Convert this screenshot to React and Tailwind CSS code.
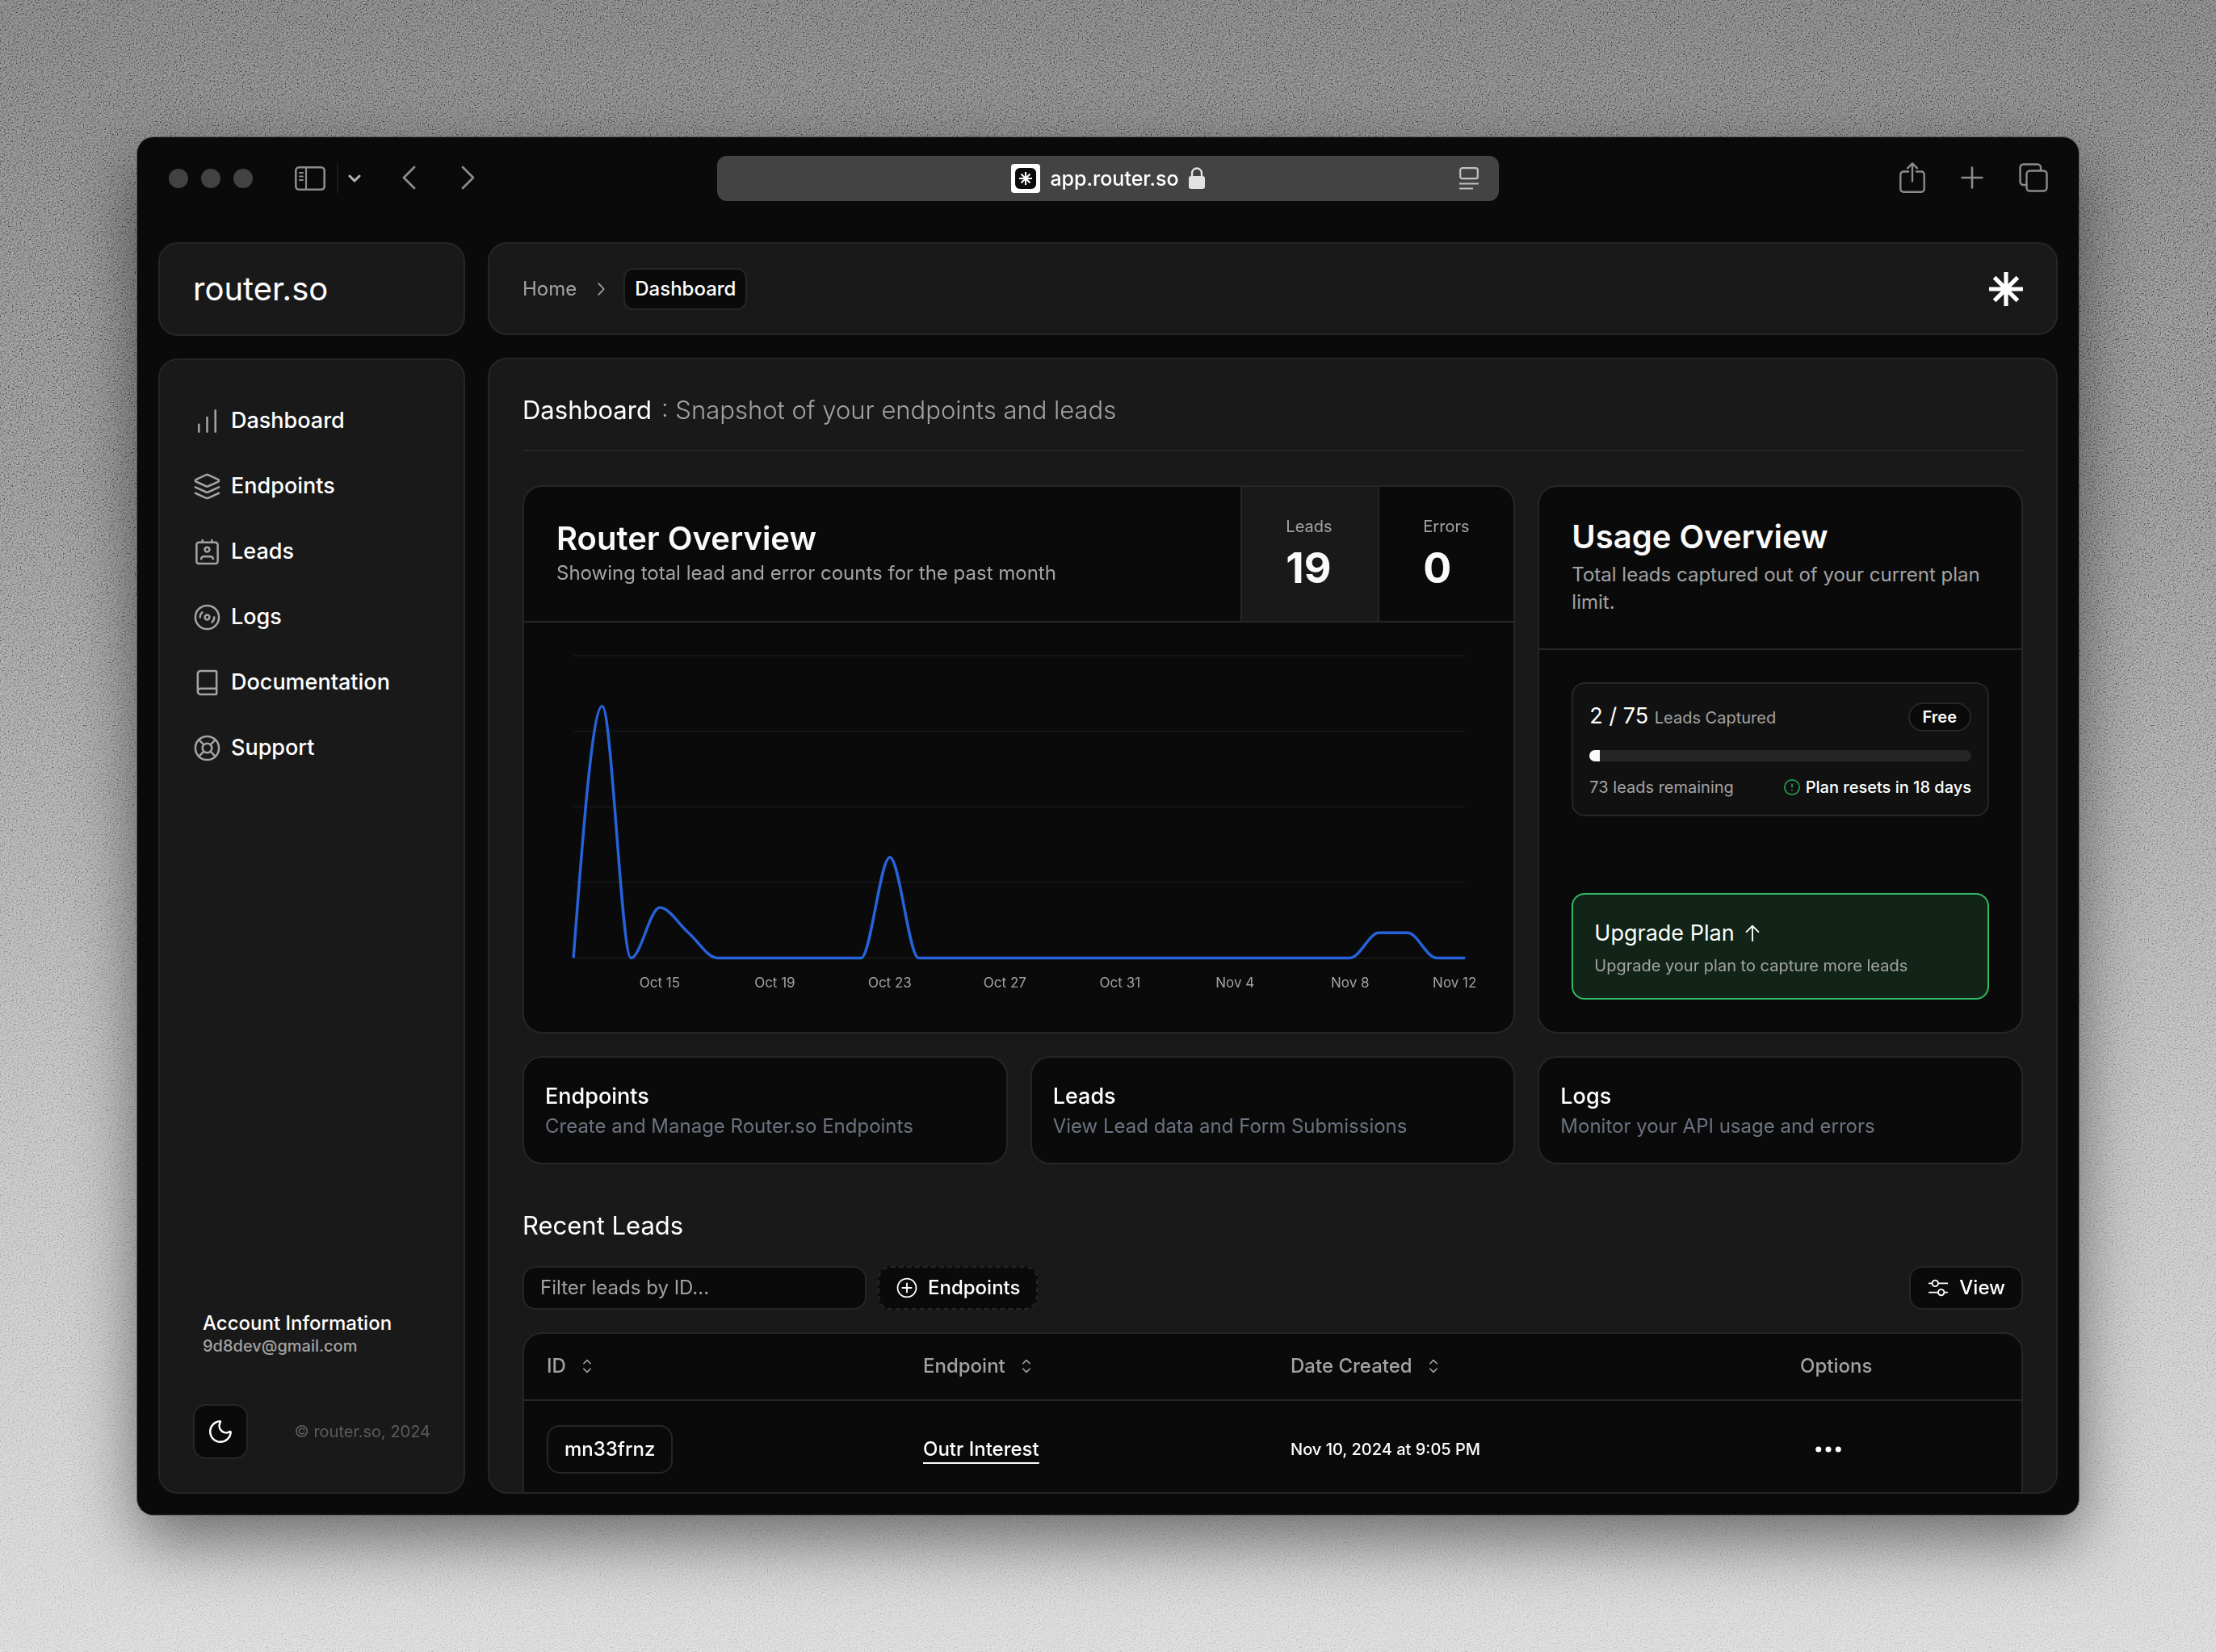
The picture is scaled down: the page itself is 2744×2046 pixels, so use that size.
import {
  BarChart,
  Book,
  CircleAlert,
  Disc3,
  Ellipsis,
  LifeBuoy,
  Moon,
} from "lucide-react";
import {
  RxArrowUp,
  RxCaretSort,
  RxChevronRight,
  RxMixerHorizontal,
  RxPlusCircled,
} from "react-icons/rx";

const leadsPerDay = [
  0, 10, 0, 2, 1, 0, 0, 0, 0, 0, 0, 4, 0, 0, 0, 0, 0, 0, 0, 0, 0, 0, 0, 0, 0, 0,
  0, 0, 1, 1, 0, 0,
];

const ticks = [
  { day: 3, label: "Oct 15" },
  { day: 7, label: "Oct 19" },
  { day: 11, label: "Oct 23" },
  { day: 15, label: "Oct 27" },
  { day: 19, label: "Oct 31" },
  { day: 23, label: "Nov 4" },
  { day: 27, label: "Nov 8" },
  { day: 31, label: "Nov 12" },
];

const navItems = [
  { label: "Dashboard", icon: BarChart },
  { label: "Endpoints", icon: LayersIcon },
  { label: "Leads", icon: ContactIcon },
  { label: "Logs", icon: Disc3 },
  { label: "Documentation", icon: Book },
  { label: "Support", icon: LifeBuoy },
];

const shortcuts = [
  { title: "Endpoints", text: "Create and Manage Router.so Endpoints" },
  { title: "Leads", text: "View Lead data and Form Submissions" },
  { title: "Logs", text: "Monitor your API usage and errors" },
];

const leads = [
  { id: "mn33frnz", endpoint: "Outr Interest", date: "Nov 10, 2024 at 9:05 PM" },
];

function LayersIcon({ size, strokeWidth }) {
  return (
    <svg width={size} height={size} viewBox="0 0 24 24" fill="none" stroke="currentColor" strokeWidth={strokeWidth} strokeLinecap="round" strokeLinejoin="round">
      <path d="m12.83 2.18a2 2 0 0 0-1.66 0L2.6 6.08a1 1 0 0 0 0 1.83l8.58 3.91a2 2 0 0 0 1.66 0l8.58-3.9a1 1 0 0 0 0-1.83Z" />
      <path d="m22 12.65-9.17 4.16a2 2 0 0 1-1.66 0L2 12.65" />
      <path d="m22 17.65-9.17 4.16a2 2 0 0 1-1.66 0L2 17.65" />
    </svg>
  );
}

function ContactIcon({ size, strokeWidth }) {
  return (
    <svg width={size} height={size} viewBox="0 0 24 24" fill="none" stroke="currentColor" strokeWidth={strokeWidth} strokeLinecap="round" strokeLinejoin="round">
      <path d="M17 18a2 2 0 0 0-2-2H9a2 2 0 0 0-2 2" />
      <rect width="18" height="18" x="3" y="4" rx="2" />
      <circle cx="12" cy="10" r="2" />
      <path d="M8 2v2M16 2v2" />
    </svg>
  );
}

function Asterisk({ className }) {
  return (
    <svg className={className} viewBox="0 0 42 42" stroke="currentColor" strokeWidth="5.2">
      <path d="M21 0v42M0 21h42M6.6 6.6l28.8 28.8M35.4 6.6 6.6 35.4" />
    </svg>
  );
}

// Monotone cubic through the daily points, flat runs stay flat.
function monotonePath(points) {
  const n = points.length;
  const slopes = [];
  for (let i = 0; i < n - 1; i++) {
    slopes.push((points[i + 1][1] - points[i][1]) / (points[i + 1][0] - points[i][0]));
  }
  const tangents = points.map((_, i) => {
    if (i === 0 || i === n - 1) return null;
    const a = slopes[i - 1];
    const b = slopes[i];
    if (a * b <= 0) return 0;
    return Math.sign(a) * Math.min(Math.abs(a), Math.abs(b), Math.abs(a + b) / 4) * 2;
  });
  tangents[0] = (3 * slopes[0] - tangents[1]) / 2;
  tangents[n - 1] = (3 * slopes[n - 2] - tangents[n - 2]) / 2;

  let d = `M${points[0][0]},${points[0][1]}`;
  for (let i = 0; i < n - 1; i++) {
    const [x0, y0] = points[i];
    const [x1, y1] = points[i + 1];
    const dx = (x1 - x0) / 3;
    d += `C${x0 + dx},${y0 + dx * tangents[i]},${x1 - dx},${y1 - dx * tangents[i + 1]},${x1},${y1}`;
  }
  return d;
}

function LeadsChart() {
  const left = 61;
  const right = 1164;
  const top = 41;
  const bottom = 415;
  const step = (right - left) / (leadsPerDay.length - 1);
  const points = leadsPerDay.map((value, i) => [
    left + i * step,
    bottom - (value / 12) * (bottom - top),
  ]);

  return (
    <svg viewBox="0 0 1224 506" className="block h-auto w-full" role="img" aria-label="Leads per day">
      {[0, 3, 6, 9, 12].map((value) => {
        const y = bottom - (value / 12) * (bottom - top);
        return <path key={value} d={`M${left} ${y}H${right}`} stroke="#161616" strokeWidth="2" />;
      })}
      <path d={monotonePath(points)} fill="none" stroke="#2662d9" strokeWidth="3.5" />
      {ticks.map((tick) => (
        <text
          key={tick.label}
          x={Math.min(left + tick.day * step, 1151)}
          y="452"
          textAnchor="middle"
          className="fill-[#a3a3a3] text-[17px]"
        >
          {tick.label}
        </text>
      ))}
    </svg>
  );
}

function BrowserBar() {
  return (
    <div className="mb-7 grid h-[102px] shrink-0 grid-cols-[1fr_minmax(0,968px)_1fr] items-center text-[#8b8b8b]">
      <div className="flex items-center pl-[39px]">
        <div className="flex gap-4">
          <span className="size-6 rounded-full bg-[#424242]" />
          <span className="size-6 rounded-full bg-[#424242]" />
          <span className="size-6 rounded-full bg-[#424242]" />
        </div>
        <button type="button" aria-label="Sidebar" className="ml-[52px]">
          <svg width="38" height="30" viewBox="0 0 38 30" fill="none" stroke="currentColor" strokeWidth="2.6">
            <rect x="1.3" y="1.3" width="35.4" height="27.4" rx="4" />
            <path d="M14 1v28" strokeWidth="2.2" />
            <path d="M6 8h4M6 12.5h4M6 17h4" strokeWidth="2" strokeLinecap="round" />
          </svg>
        </button>
        <span className="ml-[14px] h-9 w-[2px] bg-[#1c1c1c]" />
        <button type="button" aria-label="Tab groups" className="ml-3">
          <svg width="16" height="12" viewBox="0 0 16 12" fill="none" stroke="#b4b4b4" strokeWidth="3" strokeLinecap="round" strokeLinejoin="round">
            <path d="M2 3l6 6 6-6" />
          </svg>
        </button>
        <button type="button" aria-label="Back" className="ml-[50px]">
          <svg width="18" height="32" viewBox="0 0 18 32" fill="none" stroke="currentColor" strokeWidth="2.8" strokeLinecap="round" strokeLinejoin="round">
            <path d="M16 2L3 15l13 13" />
          </svg>
        </button>
        <button type="button" aria-label="Forward" className="ml-14">
          <svg width="18" height="32" viewBox="0 0 18 32" fill="none" stroke="currentColor" strokeWidth="2.8" strokeLinecap="round" strokeLinejoin="round">
            <path d="M2 2l13 13L2 28" />
          </svg>
        </button>
      </div>

      <div className="grid h-14 grid-cols-[1fr_auto_1fr] items-center rounded-xl bg-[#434343]">
        <span />
        <button type="button" className="flex items-center gap-3 text-[25px] leading-8 font-medium text-white">
          <span className="grid size-9 place-items-center rounded-sm bg-white">
            <span className="grid size-[26px] place-items-center rounded-md bg-[#0a0a0a]">
              <Asterisk className="size-4" />
            </span>
          </span>
          app.router.so
          <svg width="20" height="28" viewBox="0 0 20 28" fill="#e2e2e2">
            <rect y="11" width="20" height="16" rx="3" />
            <path d="M4 12V7.5a6 6 0 0 1 12 0V12" fill="none" stroke="#e2e2e2" strokeWidth="2.4" />
          </svg>
        </button>
        <button type="button" aria-label="Reader" className="mr-[25px] justify-self-end">
          <svg width="24" height="28" viewBox="0 0 24 28" fill="none" stroke="#c0c0c0" strokeWidth="2.2">
            <rect x="1.2" y="1.2" width="21.6" height="13" rx="2.5" />
            <path d="M0 20.5h24M0 26.5h17" />
          </svg>
        </button>
      </div>

      <div className="flex items-center justify-end gap-11 pr-[38px]">
        <button type="button" aria-label="Share">
          <svg width="32" height="40" viewBox="0 0 32 40" fill="none" stroke="currentColor" strokeWidth="2.4" strokeLinecap="round" strokeLinejoin="round">
            <path d="M11 11.5H5a3.7 3.7 0 0 0-3.7 3.7V33A3.7 3.7 0 0 0 5 36.7h22a3.7 3.7 0 0 0 3.7-3.7V15.2a3.7 3.7 0 0 0-3.7-3.7h-6" />
            <path d="M16 23.5V1.5M10 7.3l6-5.9 6 5.9" />
          </svg>
        </button>
        <button type="button" aria-label="New tab">
          <svg width="28" height="30" viewBox="0 0 28 30" stroke="currentColor" strokeWidth="2.6" strokeLinecap="round">
            <path d="M14 1.5v25M1.5 14h25" />
          </svg>
        </button>
        <button type="button" aria-label="All tabs">
          <svg width="36" height="38" viewBox="0 0 36 38" fill="none" stroke="currentColor" strokeWidth="2.4">
            <rect x="9.5" y="9.5" width="25" height="25" rx="4" />
            <path d="M9 27H5.5a4 4 0 0 1-4-4V5.5a4 4 0 0 1 4-4H23a4 4 0 0 1 4 4V9" />
          </svg>
        </button>
      </div>
    </div>
  );
}

function Sidebar() {
  return (
    <aside className="flex w-[380px] shrink-0 flex-col gap-7">
      <div className="flex h-[116px] shrink-0 items-center rounded-3xl border-2 border-[#262626] bg-[#191919] px-[41px]">
        <a href="#" className="text-[40px] leading-10 text-white">
          router.so
        </a>
      </div>

      <div className="flex flex-1 flex-col rounded-3xl border-2 border-[#262626] bg-[#191919] p-[41px]">
        <nav className="mt-[10px] flex flex-col gap-8">
          {navItems.map(({ label, icon: Icon }) => (
            <a key={label} href="#" className="flex h-[49px] items-center gap-3 text-[27px] font-medium text-white">
              <span className="text-[#a3a3a3]">
                <Icon size={35} strokeWidth={1.75} />
              </span>
              {label}
            </a>
          ))}
        </nav>

        <div className="mt-auto px-3">
          <p className="text-[24px] leading-8 font-medium text-white">Account Information</p>
          <p className="text-[20px] leading-6 font-medium text-[#a3a3a3]">9d8dev@gmail.com</p>
        </div>
        <div className="mt-[60px] flex items-center justify-between">
          <button
            type="button"
            aria-label="Toggle theme"
            className="grid size-[68px] place-items-center rounded-2xl border-2 border-[#262626] bg-[#0a0a0a] text-white"
          >
            <Moon size={34} strokeWidth={1.75} />
          </button>
          <p className="text-[20px] text-[#5c5c5c]">© router.so, 2024</p>
        </div>
      </div>
    </aside>
  );
}

function TopBar() {
  return (
    <header className="flex h-[115px] shrink-0 items-center justify-between rounded-3xl border-2 border-[#262626] bg-[#191919] px-[41px]">
      <nav aria-label="Breadcrumb" className="flex items-center text-[24px] leading-8">
        <a href="#" className="text-[#a3a3a3]">
          Home
        </a>
        <RxChevronRight size={26} className="mx-4 text-[#a3a3a3]" />
        <span aria-current="page" className="rounded-xl border-2 border-[#262626] bg-[#0a0a0a] px-3 py-2 font-medium text-white">
          Dashboard
        </span>
      </nav>
      <Asterisk className="size-[42px] text-white" />
    </header>
  );
}

function RouterOverview() {
  return (
    <section className="col-span-2 overflow-hidden rounded-3xl border-2 border-[#262626] bg-[#0a0a0a]">
      <div className="flex border-b-2 border-[#262626]">
        <div className="flex h-[166px] flex-1 flex-col justify-center px-10">
          <h2 className="text-[40px] leading-11 font-semibold text-[#fafafa]">Router Overview</h2>
          <p className="mt-1 text-[24px] leading-[34px] text-[#a3a3a3]">
            Showing total lead and error counts for the past month
          </p>
        </div>
        <button type="button" className="flex w-[170px] flex-col justify-center border-l-2 border-[#262626] bg-[#191919] pl-[54px] text-left">
          <span className="text-[20px] leading-7 text-[#a3a3a3]">Leads</span>
          <span className="mt-2 text-[52px] leading-[60px] font-bold text-[#fafafa]">19</span>
        </button>
        <button type="button" className="flex w-[168px] flex-col justify-center border-l-2 border-[#262626] pl-[54px] text-left">
          <span className="text-[20px] leading-7 text-[#a3a3a3]">Errors</span>
          <span className="mt-2 text-[52px] leading-[60px] font-bold text-[#fafafa]">0</span>
        </button>
      </div>
      <LeadsChart />
    </section>
  );
}

function UsageOverview() {
  const used = 2;
  const limit = 75;

  return (
    <section className="flex flex-col rounded-3xl border-2 border-[#262626] bg-[#0a0a0a]">
      <div className="flex h-[202px] flex-col justify-center border-b-2 border-[#262626] px-10">
        <h2 className="text-[40px] leading-11 font-semibold text-[#fafafa]">Usage Overview</h2>
        <p className="mt-2 text-[24px] leading-[34px] text-[#a3a3a3]">
          Total leads captured out of your current plan limit.
        </p>
      </div>

      <div className="flex flex-1 flex-col justify-between p-10">
        <div className="rounded-2xl border-2 border-[#262626] bg-[#111111] p-5">
          <div className="flex items-center justify-between">
            <p className="text-[27px] leading-10 text-white">
              {used} / {limit} <span className="text-[20px] text-[#a3a3a3]">Leads Captured</span>
            </p>
            <span className="rounded-full border-2 border-[#262626] bg-[#0a0a0a] px-4 text-[20px] leading-8 font-semibold text-white">
              Free
            </span>
          </div>
          <div className="mt-5 h-[14px] overflow-hidden rounded-full bg-[#262626]">
            <div className="h-full bg-[#fafafa]" style={{ width: `${(used / limit) * 100}%` }} />
          </div>
          <div className="mt-[18px] flex items-center justify-between text-[20px] leading-7">
            <span className="text-[#a3a3a3]">{limit - used} leads remaining</span>
            <span className="flex items-center gap-1.5 font-medium text-white">
              <CircleAlert size={22} strokeWidth={1.8} className="text-[#22a352]" />
              Plan resets in 18 days
            </span>
          </div>
        </div>

        <a href="#" className="rounded-2xl border-2 border-[#31ba64] bg-[#112417] px-[26px] pt-7 pb-6">
          <span className="flex items-center gap-2 text-[27px] leading-10 text-white">
            Upgrade Plan
            <RxArrowUp size={28} />
          </span>
          <span className="mt-1 block text-[20px] leading-8 text-[#a3a3a3]">Upgrade your plan to capture more leads</span>
        </a>
      </div>
    </section>
  );
}

function SortHeader({ label }) {
  return (
    <th className="px-7 text-left font-medium">
      <button type="button" className="flex items-center gap-3">
        {label}
        <RxCaretSort size={28} />
      </button>
    </th>
  );
}

function RecentLeads() {
  return (
    <section className="mt-14">
      <h2 className="text-[31px] leading-10 text-white">Recent Leads</h2>
      <div className="mt-[30px] flex h-[54px] items-stretch gap-[14px] text-[24px] font-medium text-white">
        <input
          type="text"
          aria-label="Filter leads by ID"
          placeholder="Filter leads by ID..."
          className="w-[426px] rounded-2xl border-2 border-[#262626] bg-[#0a0a0a] px-5 font-normal placeholder:text-[#a3a3a3]"
        />
        <button type="button" className="flex items-center gap-3 rounded-2xl border-2 border-dashed border-[#262626] bg-[#0a0a0a] px-5">
          <RxPlusCircled size={28} />
          Endpoints
        </button>
        <button type="button" className="ml-auto flex items-center gap-3 rounded-2xl border-2 border-[#262626] bg-[#0a0a0a] px-5">
          <RxMixerHorizontal size={28} />
          View
        </button>
      </div>

      <div className="mt-7 overflow-hidden rounded-t-3xl border-2 border-[#262626] bg-[#0a0a0a]">
        <table className="w-full table-fixed text-[24px] text-white">
          <colgroup>
            <col className="w-[466px]" />
            <col className="w-[455px]" />
            <col />
            <col className="w-[302px]" />
          </colgroup>
          <thead>
            <tr className="h-[82px] border-b-2 border-[#262626] text-[#a3a3a3]">
              <SortHeader label="ID" />
              <SortHeader label="Endpoint" />
              <SortHeader label="Date Created" />
              <th className="px-7 text-left font-medium">Options</th>
            </tr>
          </thead>
          <tbody>
            {leads.map((lead) => (
              <tr key={lead.id} className="h-[122px] border-b-2 border-[#262626]">
                <td className="px-7">
                  <button type="button" className="h-[60px] rounded-2xl border-2 border-[#262626] px-5 font-medium">
                    {lead.id}
                  </button>
                </td>
                <td className="px-7 font-medium">
                  <a href="#" className="underline decoration-2 underline-offset-8">
                    {lead.endpoint}
                  </a>
                </td>
                <td className="px-7 text-[20px] font-medium">{lead.date}</td>
                <td className="px-7">
                  <button type="button" aria-label="Options" className="ml-[14px] block">
                    <Ellipsis size={42} />
                  </button>
                </td>
              </tr>
            ))}
          </tbody>
        </table>
      </div>
    </section>
  );
}

export default function App() {
  return (
    <div className="relative isolate h-screen overflow-hidden bg-[linear-gradient(#747474,#868686_30%,#b8b8b8_68%,#d4d4d4)] p-[170px] font-['Inter',sans-serif]">
      <svg className="absolute inset-0 -z-10 size-full opacity-40 mix-blend-overlay" aria-hidden="true">
        <filter id="grain">
          <feTurbulence type="fractalNoise" baseFrequency="0.6" numOctaves="2" />
          <feColorMatrix type="matrix" values="1.5 1.5 0 0 -1 1.5 1.5 0 0 -1 1.5 1.5 0 0 -1 0 0 0 0 1" />
        </filter>
        <rect width="100%" height="100%" filter="url(#grain)" />
      </svg>

      <div className="flex h-full flex-col overflow-hidden rounded-[20px] bg-[#0a0a0a] shadow-[0_0_0_1px_rgba(90,90,90,0.9),0_32px_80px_rgba(0,0,0,0.5)]">
        <BrowserBar />
        <div className="flex min-h-0 flex-1 gap-7 px-[26px] pb-[26px]">
          <Sidebar />
          <div className="flex min-w-0 flex-1 flex-col gap-7">
            <TopBar />
            <main className="min-h-0 flex-1 overflow-hidden rounded-3xl border-2 border-[#262626] bg-[#191919] px-[41px]">
              <div className="flex items-center gap-3 border-b-2 border-[#262626] pt-[42px] pb-7 text-[31px] leading-[42px]">
                <h1 className="text-white">Dashboard</h1>
                <p className="font-light text-[#a3a3a3]">: Snapshot of your endpoints and leads</p>
              </div>

              <div className="mt-[42px] grid grid-cols-3 gap-7">
                <RouterOverview />
                <UsageOverview />
                {shortcuts.map((item) => (
                  <a key={item.title} href="#" className="rounded-3xl border-2 border-[#262626] bg-[#0a0a0a] px-[26px] py-7">
                    <h3 className="text-[27px] leading-10 font-medium text-white">{item.title}</h3>
                    <p className="text-[24px] leading-[34px] text-[#6b7280]">{item.text}</p>
                  </a>
                ))}
              </div>

              <RecentLeads />
            </main>
          </div>
        </div>
      </div>
    </div>
  );
}
